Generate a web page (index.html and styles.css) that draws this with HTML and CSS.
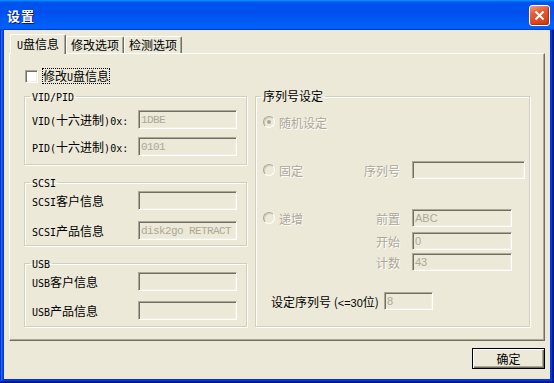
FILE: index.html
```html
<!DOCTYPE html>
<html lang="zh-CN">
<head>
  <meta charset="UTF-8" />
  <title>设置</title>
  <link rel="stylesheet" href="styles.css">
</head>
<body>
  <div class="window">
    <div class="titlebar">
      <span class="title">设置</span>
      <button class="close" aria-label="关闭">
        <svg width="13" height="13" viewBox="0 0 13 13">
          <path d="M2.5 2.5 L10.5 10.5 M10.5 2.5 L2.5 10.5" stroke="#fff" stroke-width="2" fill="none"/>
        </svg>
      </button>
    </div>

    <div class="client">
      <div class="tabs">
        <div class="tab active"><span class="en">U</span>盘信息</div>
        <div class="tab">修改选项</div>
        <div class="tab">检测选项</div>
      </div>

      <div class="panel">
        <label class="check">
          <span class="box"></span>
          <span class="check-text">修改<span class="en">U</span>盘信息</span>
        </label>

        <div class="cols">
          <div class="left">
            <fieldset class="group g-vid">
              <legend><span class="en">VID/PID</span></legend>
              <div class="row">
                <span class="lbl"><span class="en">VID(</span>十六进制<span class="en">)0x:</span></span>
                <input class="field" value="1DBE" disabled>
              </div>
              <div class="row">
                <span class="lbl"><span class="en">PID(</span>十六进制<span class="en">)0x:</span></span>
                <input class="field" value="0101" disabled>
              </div>
            </fieldset>

            <fieldset class="group g-scsi">
              <legend><span class="en">SCSI</span></legend>
              <div class="row">
                <span class="lbl"><span class="en">SCSI</span>客户信息</span>
                <input class="field" value="" disabled>
              </div>
              <div class="row">
                <span class="lbl"><span class="en">SCSI</span>产品信息</span>
                <input class="field" value="disk2go RETRACT" disabled>
              </div>
            </fieldset>

            <fieldset class="group g-usb">
              <legend><span class="en">USB</span></legend>
              <div class="row">
                <span class="lbl"><span class="en">USB</span>客户信息</span>
                <input class="field" value="" disabled>
              </div>
              <div class="row">
                <span class="lbl"><span class="en">USB</span>产品信息</span>
                <input class="field" value="" disabled>
              </div>
            </fieldset>
          </div>

          <fieldset class="group serial">
            <legend>序列号设定</legend>
            <div class="opt r1">
              <span class="radio-cell"><span class="radio checked"></span><span class="dim">随机设定</span></span>
            </div>
            <div class="opt r2">
              <span class="radio-cell"><span class="radio"></span><span class="dim">固定</span></span>
              <span class="opt-lbl dim">序列号</span>
              <input class="field sn wide" value="" disabled>
            </div>
            <div class="opt r3">
              <span class="radio-cell"><span class="radio"></span><span class="dim">递增</span></span>
              <span class="opt-lbl dim">前置</span>
              <input class="field sn" value="ABC" disabled>
            </div>
            <div class="opt r4">
              <span class="radio-cell"></span>
              <span class="opt-lbl dim">开始</span>
              <input class="field sn" value="0" disabled>
            </div>
            <div class="opt r5">
              <span class="radio-cell"></span>
              <span class="opt-lbl dim">计数</span>
              <input class="field sn" value="43" disabled>
            </div>
            <div class="opt r6">
              <span class="len-lbl">设定序列号 (<span class="sans">&lt;=30</span>位)</span>
              <input class="field sn short" value="8" disabled>
            </div>
          </fieldset>
        </div>
      </div>

      <div class="footer">
        <button class="btn">确定</button>
      </div>
    </div>
  </div>
</body>
</html>
```

FILE: styles.css
```css
* {
  box-sizing: border-box;
}
body {
  margin: 0;
  font-family: "Noto Sans CJK SC", sans-serif;
  font-size: 12px;
  color: #000;
  background: #fff;
}
.en {
  font-family: "DejaVu Sans Mono", "Noto Sans CJK SC", monospace;
  font-size: 10px;
}
.sans {
  font-family: "Liberation Sans", sans-serif;
  font-size: 11px;
}

/* window frame */
.window {
  width: 554px;
  height: 383px;
  display: flex;
  flex-direction: column;
  background: #0831d9;
  box-shadow: inset -1px -1px #00138c, inset 1px 1px #0831d9, inset -2px -2px #001ea0,
    inset 2px 2px #166aee, inset -3px -3px #003bda, inset 3px 3px #0855dd;
}
.titlebar {
  height: 30px;
  display: flex;
  align-items: center;
  justify-content: space-between;
  padding: 0 4px 0 7px;
  background: linear-gradient(180deg, #0997ff, #0053ee 8%, #0050ee 40%, #0060f8 88%, #0060f8 93%, #005bff 95%, #003dd7 96%, #003dd7);
}
.title {
  color: #fff;
  font-weight: bold;
  font-size: 13px;
  text-shadow: 1px 1px #0f1089;
  letter-spacing: 1px;
}
.close {
  width: 21px;
  height: 21px;
  padding: 0;
  border: 1px solid #fff;
  border-radius: 3px;
  background: linear-gradient(160deg, #f39a7c 0%, #e35d37 35%, #d9441c 75%, #c23a17 100%);
  box-shadow: inset -1px -1px 1px #a8300e;
  display: flex;
  align-items: center;
  justify-content: center;
}

.client {
  flex: 1;
  margin: 0 4px 4px;
  padding: 4px 5px 0;
  background: #ece9d8;
  display: flex;
  flex-direction: column;
}

/* tabs */
.tabs {
  height: 19px;
  display: flex;
  align-items: flex-end;
  padding-left: 1px;
}
.tab {
  height: 17px;
  line-height: 16px;
  padding: 0 4px;
  border: 1px solid;
  border-color: #fff #716f64 transparent #fff;
  border-bottom: 0;
  border-radius: 2px 2px 0 0;
  box-shadow: inset -1px 0 #aca899;
  background: #ece9d8;
}
.tab.active {
  height: 20px;
  padding: 0 6px;
  margin-bottom: -1px;
  line-height: 18px;
  position: relative;
  z-index: 1;
}

.panel {
  height: 288px;
  padding: 14px 14px 0;
  border: 1px solid;
  border-color: #fff #716f64 #716f64 #fff;
  box-shadow: inset -1px -1px #aca899;
}

.check {
  display: flex;
  align-items: center;
  height: 16px;
  padding-left: 1px;
}
.box {
  width: 13px;
  height: 13px;
  background: #fff;
  border: 1px solid;
  border-color: #aca899 #fff #fff #aca899;
  box-shadow: inset 1px 1px #716f64, inset -1px -1px #f1efe2;
}
.check-text {
  margin-left: 4px;
  padding: 0 1px;
  height: 16px;
  line-height: 16px;
  outline: 1px dotted #000;
  outline-offset: -1px;
}

.cols {
  display: flex;
  gap: 8px;
  margin-top: 5px;
}
.left {
  width: 223px;
  flex-shrink: 0;
}

/* group boxes */
.group {
  margin: 0;
  min-width: 0;
  padding: 0 8px 0 7px;
  border: 1px solid #d0d0bf;
  box-shadow: inset 1px 1px #fff, 1px 1px #fff;
}
.group legend {
  height: 14px;
  padding: 0 2px;
  margin-left: -2px;
  line-height: 14px;
}
.g-vid {
  padding-top: 7px;
  padding-bottom: 8px;
}
.g-vid .row + .row {
  margin-top: 8px;
}
.g-scsi {
  margin-top: 10px;
  padding-top: 2px;
  padding-bottom: 5px;
}
.g-scsi .row + .row {
  margin-top: 11px;
}
.g-usb {
  margin-top: 10px;
  padding-top: 2px;
  padding-bottom: 6px;
}
.g-usb .row + .row {
  margin-top: 10px;
}
.row {
  display: flex;
  align-items: center;
  height: 19px;
}
.lbl {
  width: 106px;
  height: 16px;
  line-height: 16px;
  white-space: nowrap;
}

.field {
  flex-shrink: 0;
  width: 99px;
  height: 19px;
  padding: 0 2px;
  border: 1px solid;
  border-color: #aca899 #fff #fff #aca899;
  box-shadow: inset 1px 1px #716f64, inset -1px -1px #f1efe2;
  background: #ece9d8;
  color: #aca899;
  font-family: "Liberation Mono", monospace;
  font-size: 11px;
  letter-spacing: -0.6px;
  outline: 0;
  -webkit-appearance: none;
}

/* serial number group */
.serial {
  flex: 1;
  padding-right: 2px;
}
.opt {
  display: flex;
  align-items: center;
  height: 18px;
}
.r1 { margin-top: 11px; height: 16px; }
.r2 { margin-top: 31px; }
.r3 { margin-top: 30px; }
.r4 { margin-top: 5px; }
.r5 { margin-top: 3px; }
.r6 { margin-top: 21px; }
.radio-cell {
  width: 100px;
  flex-shrink: 0;
  display: flex;
  align-items: center;
}
.radio {
  width: 12px;
  height: 12px;
  margin-right: 4px;
  border-radius: 50%;
  border: 1px solid;
  border-color: #aca899 #fff #fff #aca899;
  box-shadow: inset 1px 1px #d0cdbc;
  background: #ece9d8;
  display: flex;
  align-items: center;
  justify-content: center;
}
.radio.checked::after {
  content: "";
  width: 4px;
  height: 4px;
  border-radius: 50%;
  background: #aca899;
}
.dim {
  color: #aca899;
  text-shadow: 1px 1px #fff;
}
.opt-lbl {
  width: 37px;
  flex-shrink: 0;
  margin-right: 12px;
  text-align: right;
  white-space: nowrap;
}
.sn {
  width: 100px;
  height: 18px;
  font-family: "Liberation Sans", sans-serif;
  letter-spacing: 0;
}
.sn.wide {
  width: 113px;
}
.len-lbl {
  margin-left: 8px;
  width: 113px;
  flex-shrink: 0;
  white-space: nowrap;
}
.sn.short {
  width: 49px;
}

/* bottom buttons */
.footer {
  display: flex;
  justify-content: flex-end;
  margin-top: 7px;
}
.btn {
  width: 73px;
  height: 21px;
  padding: 0;
  border: 1px solid #000;
  background: #ece9d8;
  box-shadow: inset 1px 1px #fff, inset -1px -1px #716f64, inset -2px -2px #aca899;
  font-family: "Noto Sans CJK SC", sans-serif;
  font-size: 12px;
  color: #000;
}
```
